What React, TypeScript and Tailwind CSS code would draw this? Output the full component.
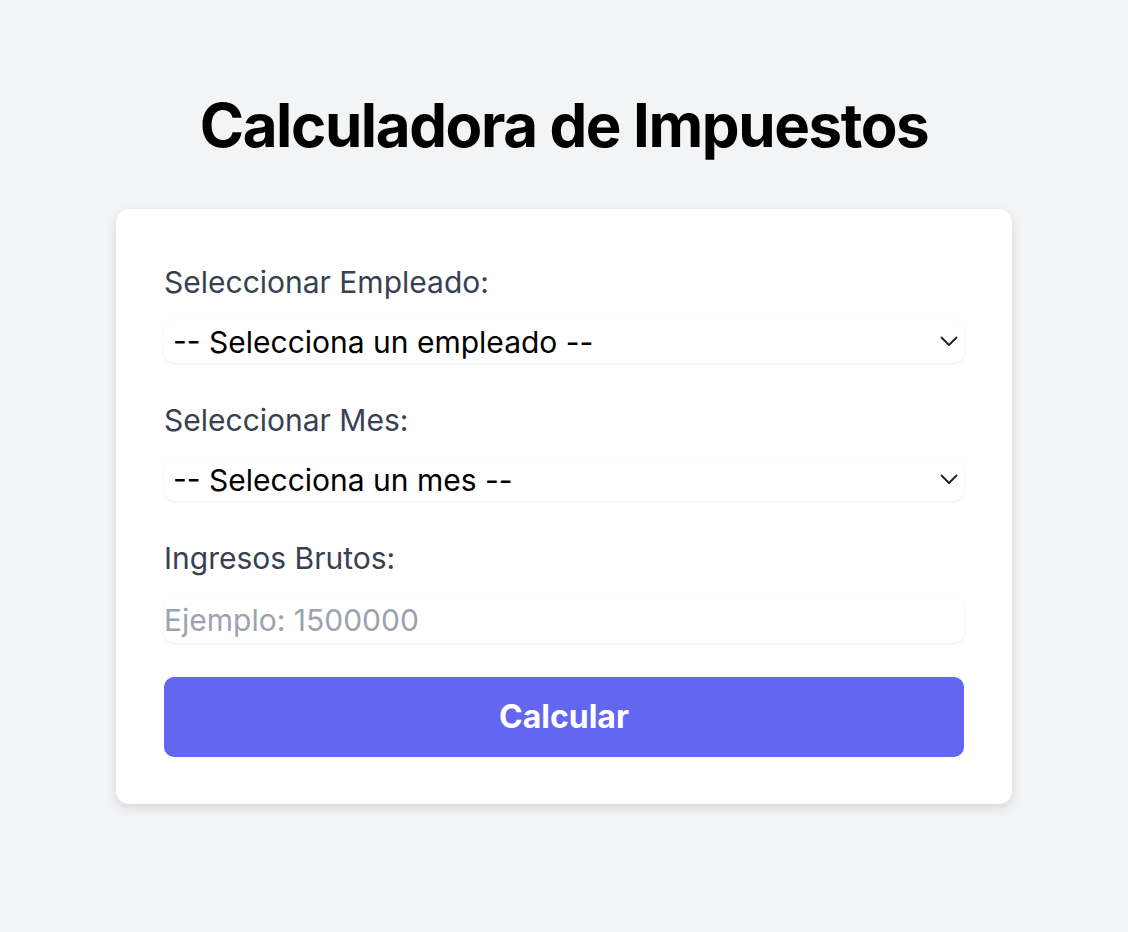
function Chevron() {
  return (
    <svg
      viewBox="0 0 18 11"
      className="pointer-events-none absolute right-[6px] top-[16px] h-[11px] w-[18px]"
      fill="none"
      stroke="#1f1f1f"
      strokeWidth={1.8}
      strokeLinecap="round"
      strokeLinejoin="round"
    >
      <polyline points="1.5,1.5 9,9 16.5,1.5" />
    </svg>
  )
}

export default function App() {
  return (
    <div className="min-h-screen bg-[#f3f4f6] pt-[95px] font-['Inter',sans-serif]">
      <h1 className="text-center text-[60px] font-bold leading-none text-black tracking-[-1.4px]">
        Calculadora de Impuestos
      </h1>

      <div className="mx-auto mt-[54px] w-[896px] rounded-[13px] bg-white px-12 pt-[55px] pb-[47px] shadow-[0_4px_12px_rgba(0,0,0,0.12)]">
        <label className="block text-[30px] leading-[36px] text-[#374151]">Seleccionar Empleado:</label>
        <div className="relative mt-[20px]">
          <select className="h-[43px] w-full appearance-none rounded-[10px] bg-white pl-[9px] text-[30px] text-black shadow-[0_1px_3px_rgba(0,0,0,0.08)] outline-none">
            <option>-- Selecciona un empleado --</option>
          </select>
          <Chevron />
        </div>

        <label className="mt-[39px] block text-[30px] leading-[36px] text-[#374151]">Seleccionar Mes:</label>
        <div className="relative mt-[20px]">
          <select className="h-[43px] w-full appearance-none rounded-[10px] bg-white pl-[9px] text-[30px] text-black shadow-[0_1px_3px_rgba(0,0,0,0.08)] outline-none">
            <option>-- Selecciona un mes --</option>
          </select>
          <Chevron />
        </div>

        <label className="mt-[39px] block text-[30px] leading-[36px] text-[#374151]">Ingresos Brutos:</label>
        <input
          type="text"
          placeholder="Ejemplo: 1500000"
          className="mt-[21px] block h-[46px] w-full rounded-[10px] bg-white text-[30px] text-black shadow-[0_1px_3px_rgba(0,0,0,0.08)] outline-none placeholder:text-[#9ca3af]"
        />

        <button className="mt-[34px] block h-[80px] w-full rounded-[10px] bg-[#6366f1] text-[32px] font-bold text-white">
          Calcular
        </button>
      </div>
    </div>
  )
}
